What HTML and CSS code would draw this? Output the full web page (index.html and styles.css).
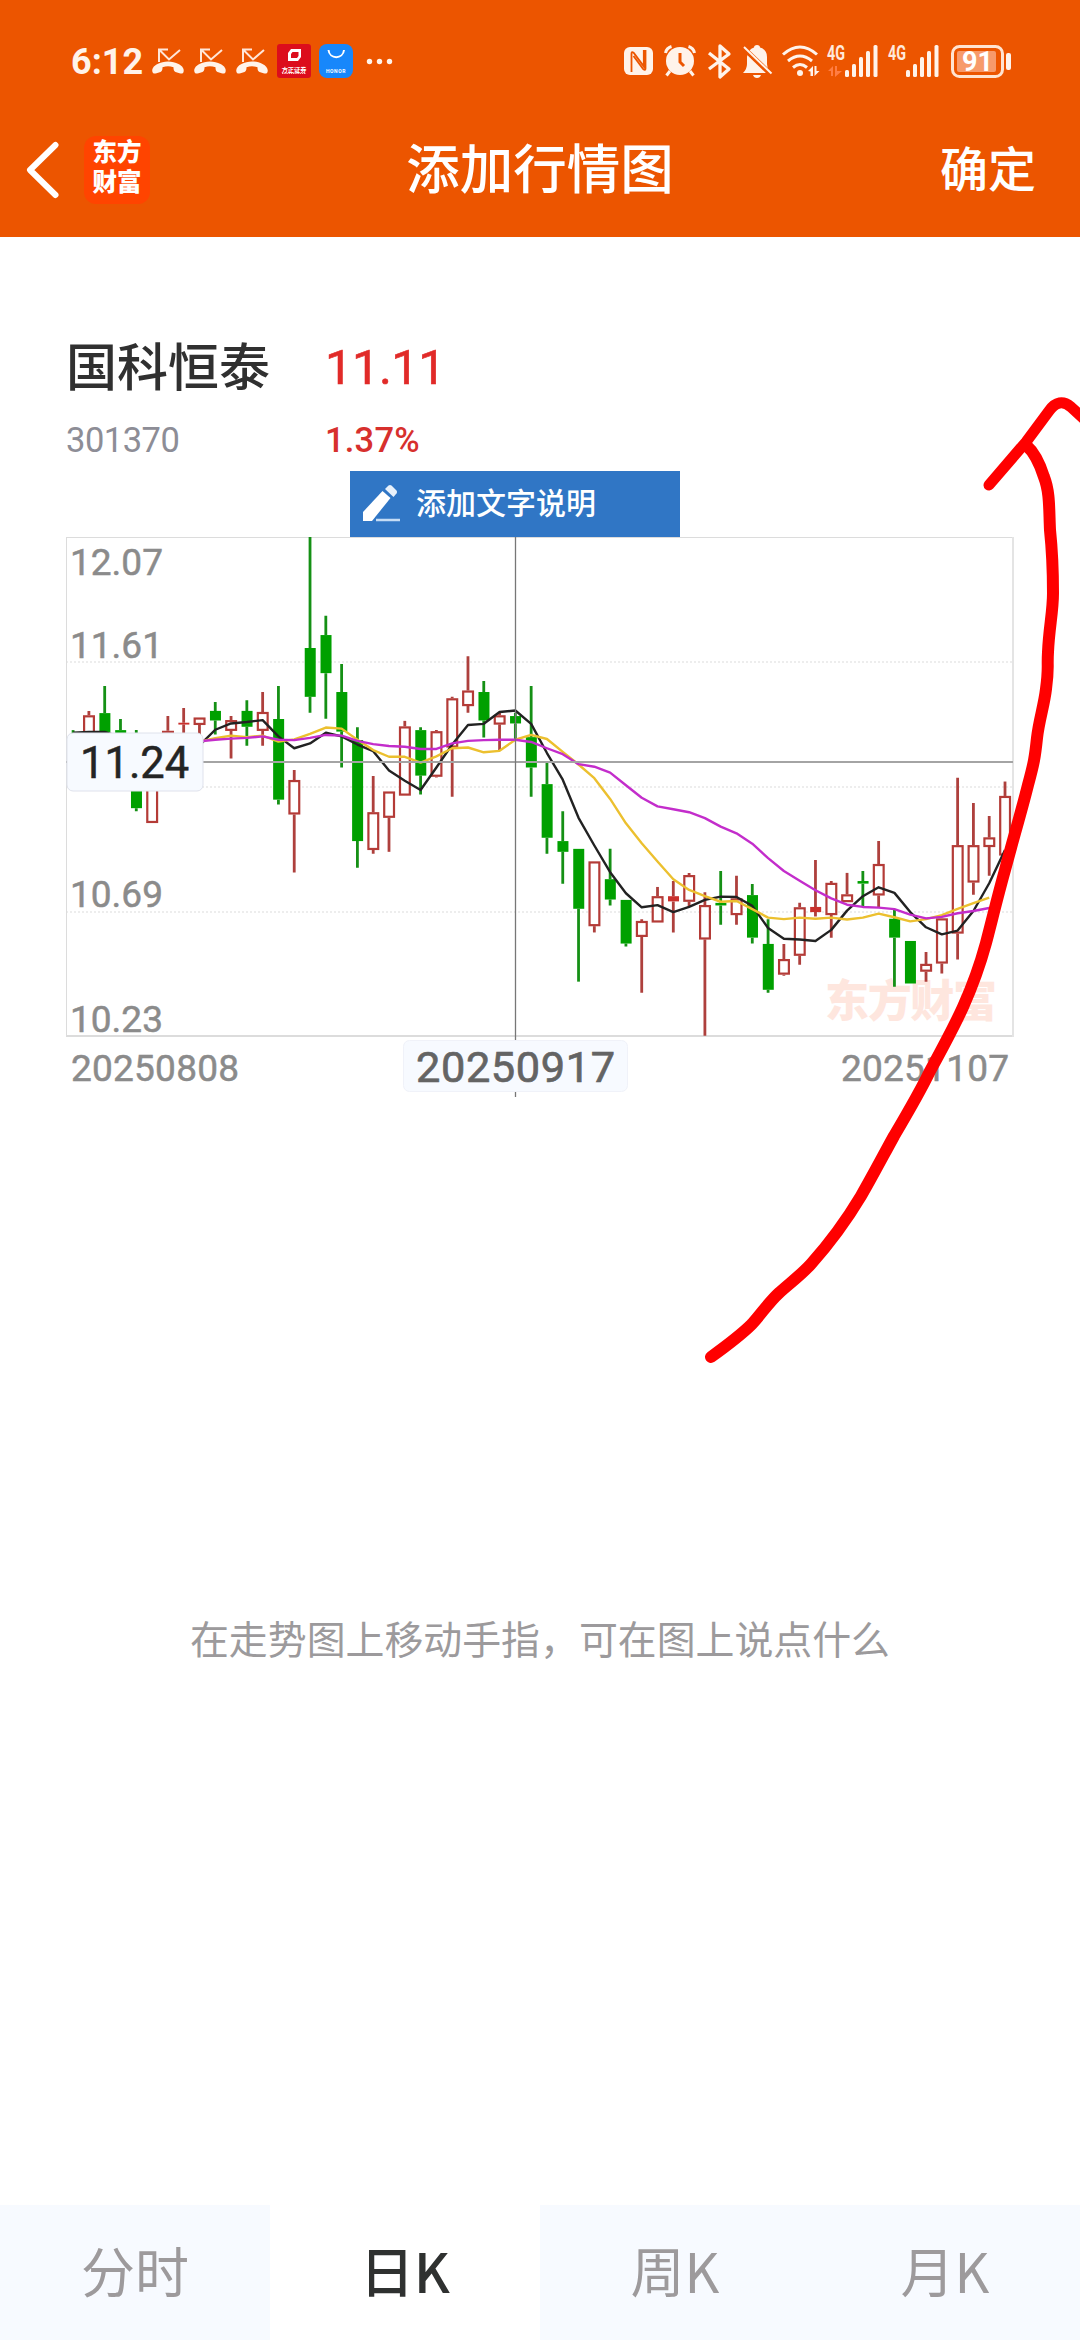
FILE: index.html
```html
<!DOCTYPE html>
<html lang="zh-CN">
<head>
<meta charset="utf-8">
<title>添加行情图</title>
<link rel="stylesheet" href="styles.css">
</head>
<body>
<div class="screen">
  <header class="top">
    <div class="status">
      <span class="clock">6:12</span>
      <svg class="status-icons" viewBox="146 40 250 44" width="250" height="44">
        <defs>
          <g id="missed">
            <path d="M7 15V2.500h9M7 2.500l10 10L28 3" fill="none" stroke="#ffe6d8" stroke-width="2"/>
            <path d="M0.500 25c-1-3 1-6 5-8 6-3.500 15-3.500 21 0 4 2 6 5 5 8-.4 1.600-2 1.800-4 1.200l-4-1.300c-1.600-.6-2-2-2-4.600-4-1.300-7-1.300-11 0 0 2.600-.4 4-2 4.600l-4 1.300c-2 .6-3.500 .4-4-1.200z" fill="#fff3ea"/>
          </g>
        </defs>
        <use href="#missed" x="152" y="47"/>
        <use href="#missed" x="194" y="47"/>
        <use href="#missed" x="236" y="47"/>
        <rect x="277" y="44" width="34" height="34" rx="3" fill="#dc0d1c"/>
        <path d="M291 49h10v8l-3 4h-10v-8zM292.500 52l-1.500 2v4h6l1.500-2v-4z" fill="#fff" fill-rule="evenodd"/>
        <text x="294" y="71.500" class="app-name" font-size="6.200">方正证券</text>
        <path d="M282 73.500h24" stroke="#fbb" stroke-width="1" stroke-dasharray="1.500 .7"/>
        <rect x="319" y="44" width="34" height="34" rx="8" fill="#1787fb"/>
        <path d="M328.500 50c1 9.500 14.500 9.500 15.500 0" fill="none" stroke="#fff" stroke-width="2"/>
        <text x="336" y="72.500" class="app-name" font-size="5" letter-spacing=".6">HONOR</text>
        <circle cx="369.500" cy="61.500" r="2.700" fill="#fff3ea"/><circle cx="379.500" cy="61.500" r="2.700" fill="#fff3ea"/><circle cx="389.500" cy="61.500" r="2.700" fill="#fff3ea"/>
      </svg>
      <svg class="system-icons" viewBox="620 40 400 44" width="400" height="44" fill="#fff3ea">
        <rect x="623" y="47" width="29" height="28" rx="6"/>
        <path d="M630.500 72V53.500q0-2.500 2.300-.6l10 13.500V50M644.500 50v18.500q0 2.500-2.300.6L632.500 56" fill="none" stroke="#ec5500" stroke-width="1.800"/>
        <circle cx="679" cy="61" r="14"/>
        <path d="M664.500 53q1-5 6-6.500M693.500 53q-1-5-6-6.500M669 71l-3.500 4.500M689 71l3.500 4.500" fill="none" stroke="#fff3ea" stroke-width="3"/>
        <path d="M679 53v9l4 4" stroke="#ec5500" stroke-width="3" fill="none"/>
        <path d="M708 53l20 16-9 8V46l9 8-20 15" fill="none" stroke="#fff3ea" stroke-width="3.300" stroke-linejoin="round"/>
        <path d="M742 73q4-4 4-9v-7q1-8 7-9.500 0-2.500 3-2.500t3 2.500q7 2 7 9.500v7q0 5 3 9zM752 75h8q-1 3-4 3t-4-3z"/>
        <path d="M742 47.500l28 27" stroke="#ec5500" stroke-width="5"/>
        <path d="M743 47l27.500 26.500" stroke="#fff3ea" stroke-width="2"/>
        <g fill="none" stroke="#fff3ea" stroke-width="3"><path d="M782 54.500q17-15 34 0M787 61q12-10 24 0M792 67.500q7-6 14 0"/></g>
        <circle cx="799" cy="73" r="3"/>
        <path d="M807 71l5-5v10h-2.500v-4.500zM813.500 66h2v5h3l-5 5z"/>
        <path d="M827 71l5-5v10h-2v-5zM834 66h2v5h5l-7 6z" fill="#ff7d43"/>
        <text x="826" y="59.500" class="net" textLength="18" lengthAdjust="spacingAndGlyphs">4G</text><text x="887" y="59.500" class="net" textLength="18" lengthAdjust="spacingAndGlyphs">4G</text>
        <g id="bars"><rect x="844" y="70" width="4" height="7" rx="1.500"/><rect x="851" y="64" width="4" height="13" rx="1.500"/><rect x="858" y="57" width="4" height="20" rx="1.500"/><rect x="865" y="51" width="4" height="26" rx="1.500"/><rect x="872.500" y="45" width="4" height="32" rx="1.500"/></g>
        <use href="#bars" x="61"/>
        <rect x="951.500" y="46.500" width="50" height="30" rx="7" fill="none" stroke="#ffe3d0" stroke-width="3"/>
        <rect x="956" y="51" width="39" height="21" rx="2" fill="#f79a6b"/>
        <rect x="1005" y="53" width="5" height="17" rx="2"/>
        <text x="976.500" y="71" class="charge">91</text>
      </svg>
    </div>
    <nav class="titlebar">
      <div class="brand">
        <svg class="back" viewBox="0 0 34 58" width="34" height="58"><path d="M29.500 4L4 29l25.500 25" fill="none" stroke="#fff" stroke-width="6" stroke-linecap="round" stroke-linejoin="round"/></svg>
        <div class="logo"><span>东方</span><span>财富</span></div>
      </div>
      <h1 class="title">添加行情图</h1>
      <div class="confirm">确定</div>
    </nav>
  </header>
  <main class="content">
    <section class="quote">
      <div class="name">国科恒泰</div><div class="price">11.11</div>
      <div class="code">301370</div><div class="change">1.37%</div>
    </section>
    <section class="chart-area">
      <button class="note">
        <svg viewBox="0 0 38 38" width="38" height="38"><path d="M0 36V27L19.500 6l8 7L9 36z" fill="#fff"/><path d="M22 4l3.500-3.500q1.500-1 3 0l5 5q1 1.500 0 3L30.500 12z" fill="#e8f1fb"/><path d="M13 35h24" stroke="#c5dcf5" stroke-width="2.500"/></svg>
        <span>添加文字说明</span>
      </button>
      <svg id="chart" class="chart" viewBox="0 537 1080 573" width="1080" height="573">
        <g stroke="#ededed" stroke-width="2" stroke-dasharray="2 2"><path d="M66 662H1013M66 787H1013M66 912H1013"/></g>
        <g fill="none" stroke="#dcdcdc" stroke-width="2"><path d="M66 537H1013M66 1036H1013"/><path d="M66.500 537V1037" stroke-width="1"/><path d="M1013 537V1037" stroke="#e4e4e4"/></g>
        <text x="825" y="1017" class="watermark" textLength="172">东方财富</text>
        <g class="axis">
          <text x="70" y="575">12.07</text><text x="70" y="657.500">11.61</text><text x="70" y="907">10.69</text><text x="70" y="1032">10.23</text>
          <text x="71" y="1080.500" textLength="168">20250808</text><text x="841" y="1080.500" textLength="168">20251107</text>
        </g>
        <g id="candles"></g>
        <g id="averages" fill="none" stroke-width="2.400" stroke-linejoin="round"></g>
        <path d="M66 762H1013" stroke="#a4a4a4" stroke-width="2"/>
        <path d="M515.500 537V1097" stroke="#777" stroke-width="1.300"/>
        <g fill="#f7faff" stroke="#dfe2ec"><rect x="67" y="733" width="136" height="58" rx="6"/><rect x="403.500" y="1040.500" width="224" height="51" rx="6" stroke="#f0f2f9"/></g>
        <text x="80" y="777.500" class="cursor-price">11.24</text>
        <text x="416" y="1081.500" class="cursor-date" textLength="199">20250917</text>
      </svg>
    </section>
    <p class="hint">在走势图上移动手指，可在图上说点什么</p>
  </main>
  <footer class="tabs">
    <div class="tab">分时</div><div class="tab active">日K</div><div class="tab">周K</div><div class="tab">月K</div>
  </footer>
  <svg class="doodle" viewBox="0 0 1080 2340" width="1080" height="2340">
    <path d="M711 1357C729 1344 741 1335 752 1324C762 1313 769 1302 779 1293C790 1283 801 1275 811 1264C828 1245 846 1221 861 1196C872 1177 883 1156 894 1136C907 1114 920 1092 930 1071C942 1049 953 1029 963 1007C972 987 980 965 986 943C992 920 998 895 1005 870C1012 843 1021 813 1028 785C1034 763 1035 757 1037 738C1039 720 1044 706 1046 689C1049 667 1047 668 1048 652C1049 628 1053 612 1053 593C1053 568 1052 549 1050 530C1049 510 1050 492 1044 477C1039 461 1034 452 1026 445"/>
    <path d="M989 485L1026 442L1049 411Q1059 397 1071 407L1084 419" stroke-width="11"/>
  </svg>
</div>
<script src="chart.js"></script>
</body>
</html>
```
FILE: styles.css
```css
* { box-sizing: border-box; }
body { margin: 0; background: #fff; font-family: Roboto, "Noto Sans CJK SC", sans-serif; }
.screen { position: relative; width: 1080px; height: 2340px; overflow: hidden; display: flex; flex-direction: column; }
.top { height: 237px; background: #ec5500; color: #fff; padding-top: 40px; }
.status { display: flex; height: 44px; align-items: center; padding-left: 71px; }
.clock { width: 75px; font-size: 36px; font-weight: 700; line-height: 44px; color: #fff3ea; }
.system-icons { margin-left: 225px; }
.app-name { fill: #fff; font-weight: 700; text-anchor: middle; }
.net { fill: #ffe9dc; font-size: 20px; font-weight: 700; }
.charge { fill: #fff; font-size: 27px; font-weight: 700; text-anchor: middle; }
.titlebar { height: 153px; display: grid; grid-template-columns: 300px 1fr 300px; align-items: center; padding: 20px 0 2px; }
.brand { display: flex; align-items: center; padding-left: 26px; gap: 24px; }
.logo { width: 66px; height: 68px; border-radius: 12px; background: #ff4400; display: flex; flex-direction: column; align-items: center; justify-content: center; font-weight: 900; font-size: 24.500px; line-height: 30px; padding-bottom: 4px; }
.title { margin: 0; font-size: 53.500px; font-weight: 500; text-align: center; line-height: 80px; padding-top: 3px; }
.confirm { text-align: right; font-size: 48px; font-weight: 500; padding: 3px 44px 0 0; line-height: 80px; }
.content { flex: 1; }
.quote { display: grid; grid-template-columns: 259px auto; justify-content: start; grid-template-rows: 84px 60px; align-items: center; padding: 89px 0 0 66px; height: 234px; }
.name { font-size: 51px; font-weight: 500; color: #303030; line-height: 84px; padding-top: 2px; }
.price { font-size: 49px; color: #e12a28; -webkit-text-stroke: .6px #e12a28; letter-spacing: -.6px; line-height: 84px; }
.code { font-size: 34.500px; color: #8d8d96; letter-spacing: -.5px; line-height: 60px; }
.change { font-size: 34.500px; color: #d7302d; letter-spacing: .2px; line-height: 60px; font-weight: 500; }
.chart-area { display: flex; flex-direction: column; }
.note { margin: 0 0 0 350px; width: 330px; height: 66px; border: 0; background: #3076c5; color: #fff; display: flex; align-items: center; gap: 15px; padding: 0 0 0 13px; font: 500 30px/60px Roboto, "Noto Sans CJK SC", sans-serif; }
.note span { padding-bottom: 1px; }
.chart { display: block; }
.axis { fill: #8b8b8b; stroke: #8b8b8b; stroke-width: .5px; font-size: 37px; }
.watermark { fill: #fee6de; font-size: 44px; font-weight: 900; }
.cursor-price { fill: #242424; stroke: #242424; stroke-width: .5px; font-size: 43.500px; }
.cursor-date { fill: #646464; stroke: #646464; stroke-width: .7px; font-size: 43.300px; }
.hint { margin: 501px 0 0; text-align: center; font-size: 38.900px; line-height: 60px; color: #9c9a9c; }
.tabs { height: 135px; display: flex; background: #f7faff; }
.tab { flex: 1; text-align: center; font-family: "Noto Sans CJK SC", sans-serif; font-size: 54px; line-height: 130px; color: #9d9a9c; }
.tab.active { background: #fff; color: #2f3130; font-weight: 500; }
.doodle { position: absolute; left: 0; top: 0; fill: none; stroke: #f00; stroke-width: 12px; stroke-linecap: round; stroke-linejoin: round; pointer-events: none; }
```
FILE: chart.js
```js
// Vertical scale: 19 is the top of the plot, 1367 the bottom.
const X0 = 73.1, STEP = 15.795;
const y = v => 530 + v / 2.7034;
const x = i => X0 + i * STEP;

// direction, high, body top, body bottom, low ("f" is a filled rise)
const candles = `g 541 560 600 600|r 489 501 560 600|g 422 495 546 548|g 511 541 549 560|g 541 560 752 760|r 560 600 792 792
r 503 543 570 580|f 481 521 526 570|r 507 507 527 560|g 465 489 515 553|r 503 514 543 618|g 460 489 532 583
r 438 492 543 583|g 422 511 729 742|r 649 676 769 926|g 19 319 451 494|g 232 284 387 510|g 362 438 545 642
g 533 568 841 913|r 665 763 865 875|r 707 707 778 870|r 516 531 718 718|g 533 541 664 715|r 541 544 667 669
r 451 455 588 721|r 341 434 476 494|g 408 438 515 561|r 494 501 526 596|g 494 503 523 565|g 422 560 642 721
g 628 687 832 875|g 760 841 870 956|g 862 862 1024 1221|r 896 896 1071 1088|g 862 944 999 1015|g 1000 1000 1118 1126
r 1052 1057 1100 1251|r 965 990 1061 1061|f 949 990 1004 1088|r 927 933 1005 1018|r 979 1014 1107 1367|g 922 1008 1015 1067
r 935 996 1041 1067|g 957 987 1102 1118|g 1052 1119 1243 1251|r 1119 1160 1202 1205|r 1008 1020 1151 1175|f 892 1019 1033 1045
r 949 954 1041 1102|r 927 985 1006 1006|g 922 949 956 1018|r 841 903 988 1020|g 1025 1051 1102 1235|g 1111 1111 1226 1226
r 1141 1173 1194 1221|r 1050 1050 1172 1199|r 670 852 1091 1161|r 738 852 953 986|r 773 831 857 935|r 680 719 880 880`
  .split(/[|\n]/).map(s => s.trim().split(" "));

const averages = [
  ["#222222", "548 546 546 560 575 585 590 590 582 540 523 519 514 558 590 577 548 558 580 598 650 678 703 642 580 527 524 492 488 524 603 675 778 853 925 982 1020 1014 1033 1019 1000 991 992 1016 1076 1105 1107 1111 1081 1029 990 966 981 1033 1074 1093 1083 1030 955 865"],
  ["#ecc02f", "570 570 570 570 572 574 574 573 572 563 556 560 556 572 566 551 534 537 567 595 613 613 629 612 590 588 601 597 567 554 565 600 634 671 727 793 847 896 944 973 990 1005 1003 1025 1048 1052 1048 1051 1048 1053 1048 1037 1047 1058 1052 1041 1024 1009 994"],
  ["#c32dcb", "571 571 571 571 571 571 571 571 571 567 564 562 558 567 568 562 554 556 570 579 584 586 592 592 577 570 568 567 567 573 590 606 633 640 656 690 724 747 755 763 779 802 820 848 887 922 948 974 996 1013 1019 1021 1025 1040 1050 1046 1036 1030 1022"]
];

document.getElementById("candles").innerHTML = candles.map(([kind, ...v], i) => {
  const [high, top, bottom, low] = v.map(n => y(+n));
  const cx = x(i), color = kind === "g" ? "#159015" : "#ae403d";
  const wick = `<path d="M${cx} ${high}V${top}M${cx} ${bottom}V${low}" stroke="${color}" stroke-width="2.8"/>`;
  const body = kind === "r"
    ? `<rect x="${cx - 4.8}" y="${top + 1}" width="9.8" height="${Math.max(bottom - top - 2, 1)}" fill="#fff" stroke="#b43b37" stroke-width="2.2"/>`
    : `<rect x="${cx - 5.3}" y="${top}" width="11" height="${bottom - top}" fill="${kind === "g" ? "#00a000" : "#ca302c"}"/>`;
  return wick + body;
}).join("");

document.getElementById("averages").innerHTML = averages.map(([color, values]) =>
  `<polyline stroke="${color}" points="${values.split(" ").map((v, i) => x(i) + "," + y(+v)).join(" ")}"/>`
).join("");
```
